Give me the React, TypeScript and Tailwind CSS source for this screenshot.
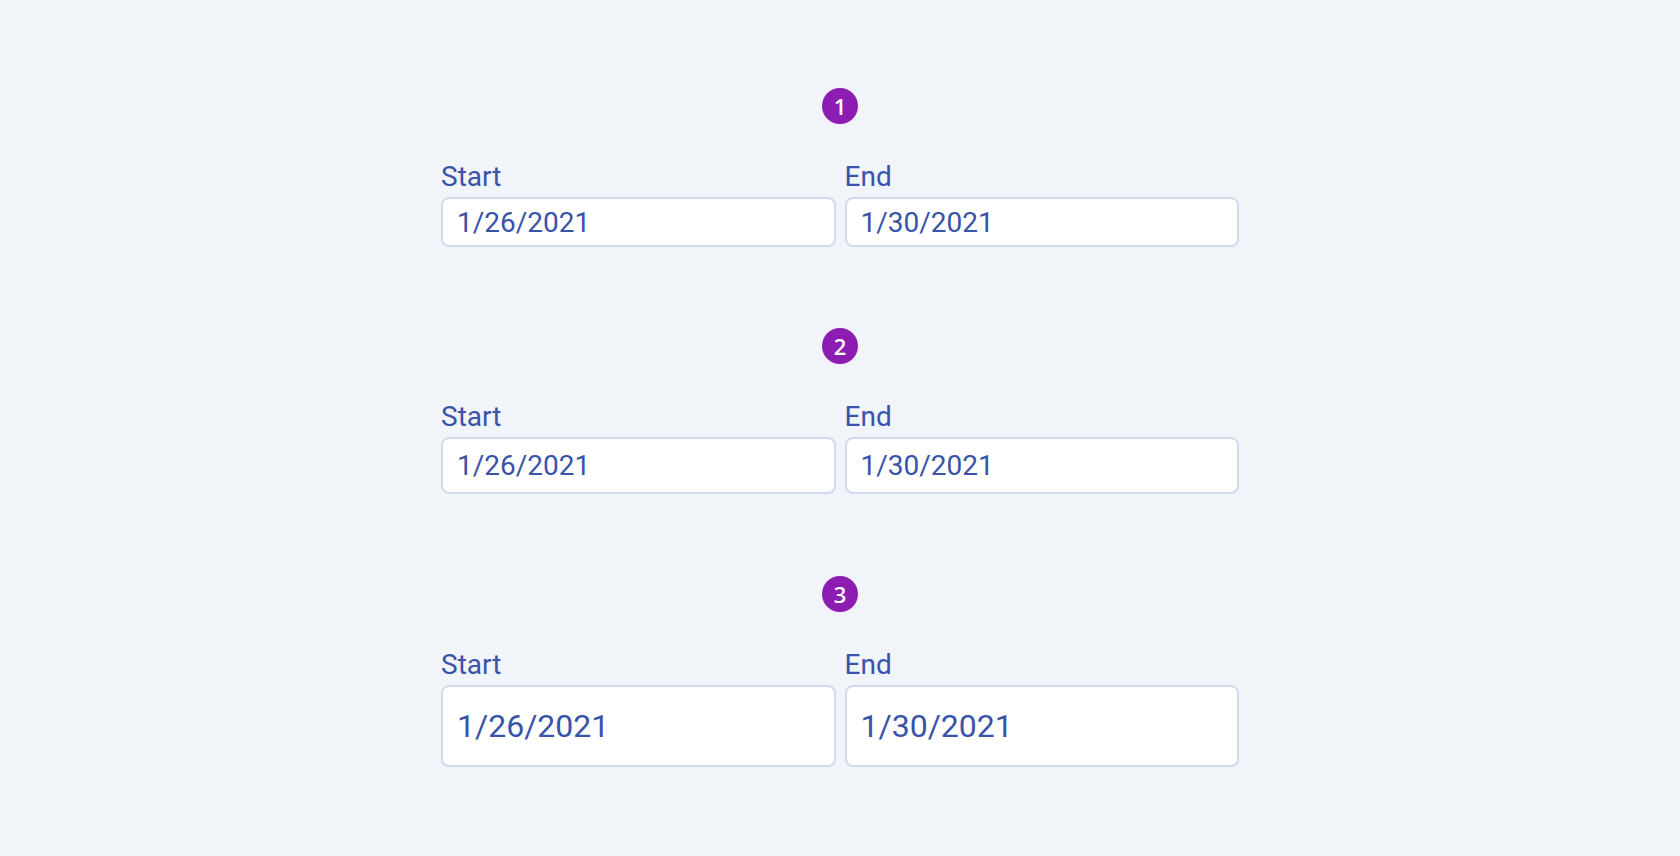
import React from "react";

interface DateRangeProps {
  step: number;
  spacing: string;
  boxHeight: string;
  textSize: string;
}

const Badge = ({ n }: { n: number }) => (
  <div className="mx-auto flex h-9 w-9 items-center justify-center rounded-full bg-[#8d1cb2] font-['Open_Sans',sans-serif] text-[22px] font-semibold leading-none text-white">
    {n}
  </div>
);

const DateField = ({
  label,
  value,
  boxHeight,
  textSize
}: {
  label: string;
  value: string;
  boxHeight: string;
  textSize: string;
}) => (
  <div className="flex flex-1 flex-col">
    <label className="text-[28px] leading-[32px] text-[#3953a9]">{label}</label>
    <input
      readOnly
      defaultValue={value}
      className={`${boxHeight} ${textSize} mt-1 w-full rounded-lg border-2 border-[#d3daee] bg-white px-[14px] font-['Roboto',sans-serif] text-[#3953a9] outline-none`}
    />
  </div>
);

const DateRange = ({ step, spacing, boxHeight, textSize }: DateRangeProps) => (
  <section className={spacing}>
    <Badge n={step} />
    <div className="mx-auto mt-[37px] flex w-[798px] gap-[9px]">
      <DateField label="Start" value="1/26/2021" boxHeight={boxHeight} textSize={textSize} />
      <DateField label="End" value="1/30/2021" boxHeight={boxHeight} textSize={textSize} />
    </div>
  </section>
);

export default function App() {
  return (
    <div className="min-h-[856px] w-full bg-[#f1f4f9] pt-[88px] font-['Roboto',sans-serif]">
      {/* Default size */}
      <DateRange step={1} spacing="" boxHeight="h-[50px]" textSize="text-[28px]" />
      {/* Taller field */}
      <DateRange step={2} spacing="mt-[81px]" boxHeight="h-[57px]" textSize="text-[28px]" />
      {/* Large field */}
      <DateRange step={3} spacing="mt-[82px]" boxHeight="h-[82px]" textSize="text-[32px]" />
    </div>
  );
}
